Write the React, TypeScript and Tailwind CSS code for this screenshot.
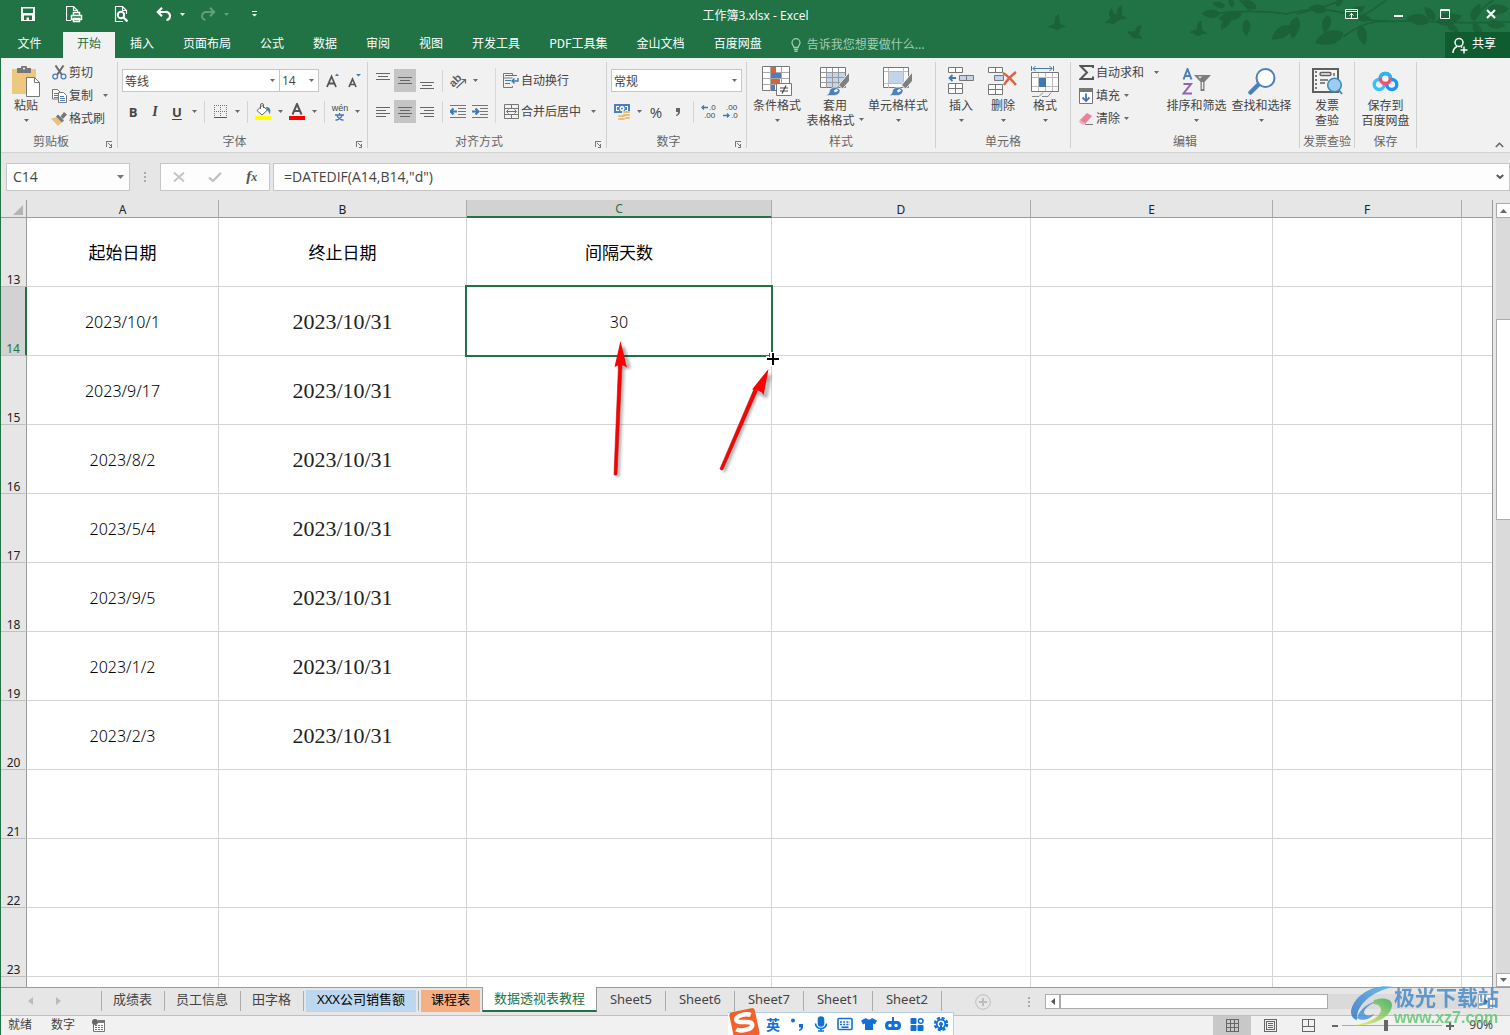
import React from "react";

type Kids = { children?: React.ReactNode };

/* ---------- small shared pieces ---------- */

function Caret({ className = "fill-[#6a6a6a]" }: { className?: string }) {
  return (
    <svg className={"h-[3px] w-[5px] shrink-0 " + className} viewBox="0 0 5 3">
      <path d="M0 0h5L2.5 3z" />
    </svg>
  );
}

function Sep() {
  return <div className="mx-1 h-[22px] w-px bg-[#d4d4d4]" />;
}

function Tool({ label, active, children }: Kids & { label: string; active?: boolean }) {
  return (
    <button
      aria-label={label}
      className={"flex h-[23px] w-[22px] shrink-0 items-center justify-center " + (active ? "bg-[#c5c5c5]" : "")}
    >
      {children}
    </button>
  );
}

function SplitTool({ label, children }: Kids & { label: string }) {
  return (
    <button aria-label={label} className="flex h-[23px] shrink-0 items-center">
      <span className="flex w-[22px] justify-center">{children}</span>
      <span className="flex w-3 justify-center">
        <Caret />
      </span>
    </button>
  );
}

function Group({ label, width, launcher, children }: Kids & { label: string; width: string; launcher?: boolean }) {
  return (
    <section className={"flex shrink-0 " + width}>
      <div className="flex min-w-0 flex-1 flex-col pt-0.5">
        <div className="flex h-[74px]">{children}</div>
        <div className="flex h-[14px] items-center leading-[14px] text-[#666]">
          <span className="flex-1 text-center">{label}</span>
          {launcher && (
            <button aria-label={label + "设置"} className="flex h-[14px] w-4 items-end pl-[5px]">
              <svg className="h-[7px] w-[7px]" viewBox="0 0 7 7" shapeRendering="crispEdges">
                <path d="M0 6V0h6v1H1v5z M6 3v4H3V6h2V3z M2 2h1v1h1v1h1v1H4V4H3V3H2z" fill="#777" />
              </svg>
            </button>
          )}
        </div>
      </div>
      <div className="my-1 w-px bg-[#d0d0d0]" />
    </section>
  );
}

function Big({ icon, lines, caret, inlineCaret, width }: { icon: React.ReactNode; lines: string[]; caret?: boolean; inlineCaret?: boolean; width: string }) {
  return (
    <button className={"flex shrink-0 flex-col items-center pt-[5px] leading-[15px] " + width}>
      <span className="flex h-8 items-center">{icon}</span>
      {lines.map((l, i) => (
        <span key={l} className="flex items-center gap-1">
          {l}
          {inlineCaret && i === lines.length - 1 && <Caret />}
        </span>
      ))}
      {caret && (
        <span className="flex h-[17px] items-center">
          <Caret />
        </span>
      )}
    </button>
  );
}

function Small({ icon, text, caret, gap = "gap-1.5" }: { icon: React.ReactNode; text: string; caret?: boolean; gap?: string }) {
  return (
    <button className={"flex h-[23px] items-center " + gap}>
      <span className="flex items-center gap-0.5">
        <span className="flex w-4 justify-center">{icon}</span>
        <span className="pb-0.5">{text}</span>
      </span>
      {caret && <Caret />}
    </button>
  );
}

function Combo({ label, value, width, options }: { label: string; value: string; width: string; options: string[] }) {
  return (
    <label className={"relative flex h-[23px] shrink-0 items-center " + width}>
      <select
        aria-label={label}
        defaultValue={value}
        className="h-full w-full appearance-none border border-[#c6c6c6] bg-white pl-0.5 text-[12px] leading-5 text-[#444] outline-none"
      >
        {options.map((o) => (
          <option key={o}>{o}</option>
        ))}
      </select>
      <Caret className="pointer-events-none absolute right-[5px] fill-[#6a6a6a]" />
    </label>
  );
}

/* ---------- ribbon icons ---------- */

const PasteIcon = () => (
  <svg width="28" height="31" viewBox="0 0 28 31">
    <path d="M0 3h24v25H0z" fill="#edc87e" />
    <path d="M5 7V2h4a3 3 0 0 1 6 0h4v5z" fill="#777" />
    <circle cx="12" cy="2.5" r="1" fill="#fff" />
    <path d="M14.500 11.500h8l5 5v14h-13z" fill="#fff" stroke="#777" />
    <path d="M22.500 11.500v5h5" fill="none" stroke="#777" />
  </svg>
);
const CutIcon = () => (
  <svg width="15" height="15" viewBox="0 0 15 15" fill="none">
    <path d="M3.500 0.500 10 10M11.500 0.500 5 10" stroke="#6a6a6a" strokeWidth="2" />
    <circle cx="3.200" cy="11.500" r="2.400" stroke="#4a7ebb" strokeWidth="1.300" />
    <circle cx="11.500" cy="11.500" r="2.400" stroke="#4a7ebb" strokeWidth="1.300" />
  </svg>
);
const CopyIcon = () => (
  <svg width="15" height="14" viewBox="0 0 15 14">
    <path d="M.5.5h5l2.500 2.500v7H.5z" fill="#fff" stroke="#777" />
    <path d="M2 4.500h4M2 6.500h4M2 8.500h4" stroke="#4a7ebb" />
    <path d="M6.500 3.500h5l3 3v7h-8z" fill="#fff" stroke="#777" />
    <path d="M8 7.500h4M8 9.500h5M8 11.500h5" stroke="#4a7ebb" />
  </svg>
);
const BrushIcon = () => (
  <svg width="16" height="14" viewBox="0 0 16 14">
    <path d="M0 6.500 6 5l5 5-4 4z" fill="#edc07a" />
    <path d="M5 4.500 7 2.500l6 6-2 2z" fill="#777" />
    <path d="M9.500 4.500 13 0l3 2.500-4 4.500z" fill="#777" />
  </svg>
);
const BorderIcon = () => (
  <svg width="13" height="13" viewBox="0 0 13 13" shapeRendering="crispEdges">
    <path d="M.5 0v12M6.500 0v12M12.500 0v12M0 .5h13M0 6.500h13" stroke="#777" strokeDasharray="1 1" />
    <path d="M0 12.500h13" stroke="#555" />
  </svg>
);
const FillIcon = () => (
  <svg width="17" height="17" viewBox="0 0 17 17">
    <path d="M7 2.500 12.500 7 7 12 2 7.500z" fill="#fff" stroke="#666" />
    <path d="M5.500 6V2a1.500 1.500 0 0 1 3 0v3" fill="none" stroke="#666" />
    <path d="M11 4c4 0 5 2 4 7-1 0-1-3-3-4z" fill="#4a7ebb" />
    <path d="M0 13h16v4H0z" fill="#ff0" />
  </svg>
);
function HLines({ rows }: { rows: [number, number, number][] }) {
  return (
    <svg width="14" height="18" viewBox="0 0 14 18" shapeRendering="crispEdges">
      {rows.map(([x, y, w]) => (
        <rect key={y} x={x} y={y} width={w} height="1" fill="#666" />
      ))}
    </svg>
  );
}
const OrientIcon = () => (
  <svg width="17" height="16" viewBox="0 0 17 16" className="overflow-visible">
    <text x="0" y="11" fontSize="11" fontWeight="700" fill="#5a5a5a" fontFamily="Liberation Sans, sans-serif" transform="rotate(-45 6 9)">
      ab
    </text>
    <path d="M6.500 15 15 7M11.500 6.500H15.500V10.500" fill="none" stroke="#666" strokeWidth="1.200" />
  </svg>
);
function IndentIcon({ right }: { right?: boolean }) {
  return (
    <svg width="16" height="14" viewBox="0 0 16 14">
      <path d="M0 .5h16M8 3.500h8M8 6.500h8M8 9.500h8M0 12.500h16" stroke="#777" />
      <path d={right ? "M0 6.500h5M3.500 3.500l3 3-3 3" : "M7 6.500H2M3.500 3.500l-3 3 3 3"} fill="none" stroke="#3f78b5" strokeWidth="2" />
    </svg>
  );
}
const WrapIcon = () => (
  <svg width="16" height="15" viewBox="0 0 16 15" fill="none">
    <path d="M9.500 2V.5h-9v14h9V13M.5 5h9" stroke="#777" />
    <path d="M2 2.500h12M2 7.500h6M2 10.500h5" stroke="#3f78b5" />
    <path d="M15 5v3H9.500M11.500 5.500 9 8l2.500 2.500" stroke="#3f78b5" strokeWidth="1.400" />
  </svg>
);
const MergeIcon = () => (
  <svg width="15" height="15" viewBox="0 0 15 15" fill="none">
    <path d="M.5.5h14v14H.5zM.5 4.500h14M.5 10.500h14M7.500 .5v4M7.500 10.500v4" stroke="#777" />
    <path d="M3 7.500h9M4.500 5.500l-2 2 2 2M10.500 5.500l2 2-2 2" stroke="#3f78b5" />
  </svg>
);
const MoneyIcon = () => (
  <svg width="17" height="16" viewBox="0 0 17 16">
    <path d="M0 0h16v9H0z" fill="#4a80bc" />
    <path d="M2 2h3v1H3v3h2v1H2zM11 2h3v5h-3V6h2V3h-2z" fill="#fff" />
    <circle cx="8" cy="4.500" r="2.500" fill="#fff" />
    <circle cx="8" cy="4.500" r="1" fill="#4a80bc" />
    <path d="M8 7h9v9H3v-5h5z" fill="#f1f1f1" />
    <g fill="#e9bd76">
      <rect x="9" y="7" width="7" height="2" rx="1" />
      <rect x="9" y="10" width="7" height="2" rx="1" />
      <rect x="4" y="11" width="7" height="2" rx="1" />
      <rect x="4" y="14" width="7" height="2" rx="1" />
      <rect x="11" y="13" width="5" height="2" rx="1" />
    </g>
  </svg>
);
function DecimalIcon({ dec }: { dec?: boolean }) {
  return (
    <svg width="16" height="15" viewBox="0 0 16 15" fill="#444" fontFamily="Liberation Sans, sans-serif" fontSize="8">
      <text x={dec ? 3 : 8} y="6">{dec ? ".00" : ".0"}</text>
      <text x={dec ? 8 : 3} y="14">{dec ? ".0" : ".00"}</text>
      <path d={dec ? "M0 11.500h6M4 9.500l2 2-2 2" : "M7 3.500H1M3 1.500l-2 2 2 2"} fill="none" stroke="#3f78b5" strokeWidth="1.300" />
    </svg>
  );
}
const CondIcon = () => (
  <svg width="30" height="31" viewBox="0 0 30 31">
    <path d="M.5.5h27v24H.5z" fill="#fff" stroke="#777" />
    <path d="M8.500 1v24M19.500 1v24M1 6.500h26M1 12.500h26M1 18.500h26" stroke="#aaa" />
    <path d="M9 1h5v6H9zM9 13h9v5H9z" fill="#d9623f" />
    <path d="M9 7h10v5H9zM9 19h4v5H9z" fill="#4a80bc" />
    <path d="M14.500 17.500h15v12h-15z" fill="#fff" stroke="#777" />
    <path d="M18 22h8M18 25h8M24 19.500l-4 8" stroke="#444" strokeWidth="1.200" />
  </svg>
);
const BrushOver = () => (
  <>
    <path d="M29.500 6v9l-7 8-4-4z" fill="#808080" stroke="#f1f1f1" />
    <path d="M5 29.500c5-1 4-4 5-6 3-3.500 9-2 10 1 0 4-4 5-7 5z" fill="#4a80bc" stroke="#f1f1f1" strokeWidth="0.600" />
    <path d="M14 25c1-2.500 4-2 4 0l-3 1.500z" fill="#fff" />
  </>
);
const TableFmtIcon = () => (
  <svg width="30" height="30" viewBox="0 0 30 30">
    <path d="M.5 1.500h25v20H.5z" fill="#fff" stroke="#777" />
    <path d="M6 7h19v14H6z" fill="#c3d5ea" />
    <path d="M6.500 2v20M12.500 2v20M18.500 2v20M1 6.500h24M1 11.500h24M1 16.500h24" stroke="#999" />
    <BrushOver />
  </svg>
);
const CellStyleIcon = () => (
  <svg width="30" height="30" viewBox="0 0 30 30">
    <path d="M.5 1.500h25v20H.5z" fill="#fff" stroke="#777" />
    <path d="M5.500 2v20M20.500 2v20M1 5.500h24M1 17.500h24" stroke="#bbb" />
    <path d="M6 6h14v11H6z" fill="#c3d5ea" />
    <BrushOver />
  </svg>
);
const InsertIcon = () => (
  <svg width="27" height="28" viewBox="0 0 27 28" fill="#fff" stroke="#777">
    <path d="M.5.5h14v5H.5zM7.500.5v5M.5 16.500h14v10H.5zM7.500 16.500v10M.5 21.500h14" />
    <path d="M11.500 8.500h14v5h-14zM18.500 8.500v5" fill="#c3d5ea" />
    <path d="M8 11H2M4.500 8 1.500 11l3 3" fill="none" stroke="#3f78b5" strokeWidth="1.800" />
  </svg>
);
const DeleteIcon = () => (
  <svg width="30" height="28" viewBox="0 0 30 28" fill="#fff" stroke="#777">
    <path d="M.5.5h14v5H.5zM7.500.5v5M.5 17.500h14v10H.5zM7.500 17.500v10M.5 22.500h14" />
    <path d="M6.500 8.500h9v5h-9z" fill="#c3d5ea" />
    <path d="M15 6c5 3 9 7 13 12M28 5c-5 4-9 8-12 13" fill="none" stroke="#d9623f" strokeWidth="2.400" />
  </svg>
);
const FormatIcon = () => (
  <svg width="28" height="31" viewBox="0 0 28 31" fill="none">
    <path d="M.5 0v5M22.500 0v5M2 2.500h19M4.500 0 2 2.500 4.500 5M18.500 0 21 2.500 18.500 5" stroke="#3f78b5" />
    <path d="M.5 6.500h27v19H.5z" fill="#fff" stroke="#777" />
    <path d="M7.500 7v18M14.500 7v18M21.500 7v18M1 11.500h26M1 20.500h26" stroke="#bbb" />
    <path d="M8 12h7v9H8z" fill="#3f78b5" />
    <path d="M1 30.500h7l4-4M11 30.500h6l3-4" stroke="#888" />
  </svg>
);
const SigmaIcon = () => (
  <svg width="15" height="15" viewBox="0 0 15 15">
    <path d="M14 3V1H1.500L8 7.500 1.500 14H14v-2.500" fill="none" stroke="#555" strokeWidth="2" />
  </svg>
);
const FillDownIcon = () => (
  <svg width="14" height="16" viewBox="0 0 14 16">
    <path d="M.5.5h13v15H.5z" fill="#fff" stroke="#777" />
    <path d="M0 0h14v4H0z" fill="#777" />
    <path d="M7 5.500v7M3.500 9.500 7 13l3.500-3.500" fill="none" stroke="#3f78b5" strokeWidth="1.800" />
  </svg>
);
const EraserIcon = () => (
  <svg width="15" height="13" viewBox="0 0 15 13">
    <path d="m1 8 7-7 5 3-7 8z" fill="#e9829a" />
    <path d="m1 8 5 4-2 1-4-3z" fill="#f3a9b8" />
    <path d="M6 12.500h8" stroke="#777" />
  </svg>
);
const SortIcon = () => (
  <svg width="29" height="27" viewBox="0 0 29 27">
    <path d="M1.500 11.500 5.500 1l4 10.500M3 8h5" fill="none" stroke="#4a80bc" strokeWidth="2" />
    <path d="M1.500 16H9L1.500 25.500H10" fill="none" stroke="#9461b5" strokeWidth="2" />
    <path d="M12 7h17l-6.500 7v9h-4v-9z" fill="#7d7d7d" />
    <path d="M16 8.500h4l-2 2zM19.800 14h1.400v7h-1.400z" fill="#f1f1f1" />
  </svg>
);
const FindIcon = () => (
  <svg width="28" height="27" viewBox="0 0 28 27">
    <path d="M2.500 24.500 11 16" stroke="#4a80bc" strokeWidth="4.500" strokeLinecap="round" />
    <circle cx="17.500" cy="10" r="9" fill="#fff" stroke="#4a80bc" strokeWidth="2" />
  </svg>
);
const InvoiceIcon = () => (
  <svg width="31" height="27" viewBox="0 0 31 27">
    <path d="M1 1h25v23H1z" fill="#f4f4f4" stroke="#5f5f5f" strokeWidth="2" />
    <path d="M4 3v19" stroke="#777" strokeDasharray="2 2" strokeWidth="2" />
    <rect x="8" y="4.500" width="11" height="3" rx="1.500" fill="none" stroke="#5f5f5f" strokeWidth="1.500" />
    <path d="M8 12h8M8 15h5M22 5v3" stroke="#5f5f5f" strokeWidth="1.400" />
    <path d="m26 21 4 5" stroke="#3d8fb5" strokeWidth="2" />
    <circle cx="22.500" cy="17" r="6.800" fill="#9ccbf5" stroke="#3d8fb5" strokeWidth="1.600" />
  </svg>
);
const CloudIcon = () => (
  <svg width="27" height="22" viewBox="0 0 27 22" fill="none" strokeWidth="3.400">
    <circle cx="7.200" cy="14.500" r="5" stroke="#35c3f7" />
    <circle cx="19.800" cy="14.500" r="5" stroke="#1497f5" />
    <circle cx="13.300" cy="8.500" r="5" fill="#f1f1f1" stroke="#f0506e" />
    <path d="M8 8a5.500 5.500 0 0 1 10.800 0" stroke="#29b6f6" />
  </svg>
);

/* ---------- header ---------- */

function Bird({ x, y, r }: { x: number; y: number; r: number }) {
  return <path transform={`translate(${x} ${y}) rotate(${r})`} d="M-26 2C-14-4-8-6-4-10-8-20-4-30 6-36 6-24 12-14 10-6 16-4 24-2 28 4 18 2 14 6 8 8 2 16-8 10-12 6-18 6-22 6-26 2z" />;
}
function Leaf({ x, y, r, s }: { x: number; y: number; r: number; s: number }) {
  return <path transform={`translate(${x} ${y}) rotate(${r}) scale(${s})`} d="M0 0C8-16 30-20 56-4 40 14 14 18 0 0z" />;
}
const leaves: [number, number, number, number][] = [
  [330, 42, 185, 1], [345, 20, 200, 0.7], [370, 22, 250, 0.6], [395, 40, 160, 0.8], [360, 52, 130, 0.8], [410, 58, 95, 0.9],
  [440, 25, 210, 0.9], [420, 20, 250, 0.6], [380, 48, 175, 1], [560, 50, 105, 1.2], [545, 78, 150, 1.3], [650, 30, 190, 1],
  [655, 45, 105, 1], [680, 20, 300, 0.7], [700, 100, 165, 1.6], [750, 75, 80, 1.1], [720, 40, -20, 0.9], [740, 52, 10, 0.8],
  [960, 62, 190, 1.3], [975, 60, 235, 0.9], [980, 66, -10, 1.4], [1010, 70, 40, 0.8], [1085, 60, -60, 1], [1090, 70, 60, 0.9],
  [1130, 30, 0, 1.2], [1130, 70, 10, 1],
];
function Foliage() {
  return (
    <svg className="pointer-events-none absolute top-0 right-0 h-[58px] w-[480px]" viewBox="0 0 1440 174" fill="#1b6238">
      <g transform="translate(240 0)">
        <Bird x={-160} y={78} r={0} />
        <Bird x={8} y={60} r={-15} />
        <Bird x={24} y={50} r={10} />
        <Bird x={75} y={104} r={25} />
        <Bird x={265} y={96} r={5} />
        <path
          d="M320 40C400 30 460 32 530 42 600 20 680 30 720 45 800 75 880 60 960 64 1040 70 1100 70 1200 66M420 34C410 20 400 10 390 0M560 42C600 30 660 20 690 0M700 110C740 80 770 66 830 62M745 50C780 40 800 20 830 0M1090 68C1100 40 1120 20 1150 0"
          fill="none"
          stroke="#1b6238"
          strokeWidth="5"
        />
        {leaves.map(([x, y, r, s], i) => (
          <Leaf key={i} x={x} y={y} r={r} s={s} />
        ))}
      </g>
    </svg>
  );
}

const tabs = ["插入", "页面布局", "公式", "数据", "审阅", "视图", "开发工具", "PDF工具集", "金山文档", "百度网盘"];

function Header() {
  return (
    <header className="relative h-[58px] shrink-0 bg-[#217346] text-white">
      <Foliage />
      <div className="relative grid h-8 grid-cols-[1fr_auto_1fr] items-start">
        <div className="flex h-7 items-center pl-[19px]">
          <button aria-label="保存" className="w-[46px]">
            <svg width="14" height="14" viewBox="0 0 14 14" className="ml-px">
              <path d="M0 0h14v14H0z" fill="#fff" />
              <path d="M2 1.500h10V6H2zM3 8.500h8V13H8v-2.500H5.500V13H3z" fill="#217346" />
            </svg>
          </button>
          <button aria-label="快速打印" className="w-12">
            <svg width="17" height="17" viewBox="0 0 17 17" fill="none" stroke="#fff">
              <path d="M5 14.500H.5V.5h7l4 4V7M7.500.5v4h4" strokeWidth="1.200" />
              <path d="M5.500 9.500h10v4h-10zM7.500 9V6.500h6V9M7.500 12.500h6v3h-6z" strokeWidth="1.500" />
            </svg>
          </button>
          <button aria-label="打印预览" className="w-[42px]">
            <svg width="14" height="17" viewBox="0 0 14 17" fill="none" stroke="#fff">
              <path d="M9 15.500H1.500v-15h7l4 4V8M8.500.5v4h4" strokeWidth="1.200" />
              <circle cx="7" cy="9" r="3.200" strokeWidth="2" />
              <path d="m9.500 11.500 4 4" strokeWidth="2.400" />
            </svg>
          </button>
          <button aria-label="撤消" className="flex w-11 items-center gap-2">
            <svg width="16" height="14" viewBox="0 0 16 14" fill="none" stroke="#fff" strokeWidth="2.200">
              <path d="M6 0.800 1.800 5 6 9.200M2 5h7.500a4 4 0 0 1 1 8" />
            </svg>
            <Caret className="fill-white" />
          </button>
          <button aria-label="恢复" className="flex w-[52px] items-center gap-2 opacity-30">
            <svg width="16" height="14" viewBox="0 0 16 14" fill="none" stroke="#fff" strokeWidth="2">
              <path d="M10 .8 14.200 5 10 9.200M14 5H6.500a4 4 0 0 0-1 8" />
            </svg>
            <Caret className="fill-white" />
          </button>
          <button aria-label="自定义快速访问工具栏">
            <svg width="5" height="6" viewBox="0 0 5 6" fill="#fff">
              <path d="M0 0h5v1H0zM0 3h5L2.500 5.500z" />
            </svg>
          </button>
        </div>
        <h1 className="h-8 font-['Open_Sans','Noto_Sans_CJK_SC',sans-serif] text-[12px] leading-8">工作簿3.xlsx - Excel</h1>
        <div className="flex h-7 items-center justify-end gap-9 pr-[14px]">
          <button aria-label="功能区显示选项">
            <svg width="13" height="10" viewBox="0 0 13 10" fill="none" stroke="#fff">
              <path d="M.5.5h12v9H.5zM.5 2.500h12M6.500 9V4.500M4.500 6.500l2-2 2 2" />
            </svg>
          </button>
          <button aria-label="最小化" className="h-3">
            <svg width="10" height="12" viewBox="0 0 10 12">
              <path d="M0 7h9v2H0z" fill="#fff" />
            </svg>
          </button>
          <button aria-label="最大化">
            <svg width="10" height="10" viewBox="0 0 10 10" fill="none" stroke="#fff">
              <path d="M.5.5h9v9h-9zM0 1.500h10" />
            </svg>
          </button>
          <button aria-label="关闭">
            <svg width="10" height="10" viewBox="0 0 10 10">
              <path d="m1 1 8 8M9 1 1 9" stroke="#fff" strokeWidth="2" />
            </svg>
          </button>
        </div>
      </div>
      <nav className="relative flex h-[26px] items-stretch">
        <button className="mr-1.5 w-14 pb-1 pl-px text-center">文件</button>
        <button className="mr-px bg-[#f1f1f1] px-[14px] pb-1 text-[#217346]">开始</button>
        <div className="flex gap-px">
          {tabs.map((t) => (
            <button key={t} className="px-[14px] pb-1">
              {t}
            </button>
          ))}
        </div>
        <label className="ml-[15px] flex items-center gap-1.5 text-[#a5cbb4]">
          <svg width="10" height="14" viewBox="0 0 10 14" fill="none" stroke="currentColor" strokeWidth="1.300">
            <path d="M3 9.500C3 8 1 7 1 4.700a4 4 0 0 1 8 0C9 7 7 8 7 9.500zM3 11.500h4M3.500 13.300h3" />
          </svg>
          <input aria-label="操作说明搜索" placeholder="告诉我您想要做什么..." className="w-36 bg-transparent pb-0.5 text-[12px] outline-none placeholder:text-[#a5cbb4]" />
        </label>
        <button className="ml-auto flex w-[65px] items-center gap-1 bg-[#0f5c30] pl-[7px]">
          <svg width="16" height="17" viewBox="0 0 16 17" fill="none" stroke="#fff" strokeWidth="1.500">
            <circle cx="7" cy="5.500" r="4" />
            <path d="M1 16c0-4 2-5.500 4-6.500M9 9.500l1 1M12 9.500v7M8.500 13h7" />
          </svg>
          <span className="pb-1">共享</span>
        </button>
      </nav>
    </header>
  );
}

function Ribbon() {
  return (
    <div className="flex h-[95px] shrink-0 border-b border-[#d2d2d2] bg-[#f1f1f1] text-[#444]">
      <Group label="剪贴板" width="w-[117px]" launcher>
        <Big icon={<PasteIcon />} lines={["粘贴"]} caret width="w-[50px]" />
        <div className="flex flex-col items-start pt-px">
          <Small icon={<CutIcon />} text="剪切" />
          <Small icon={<CopyIcon />} text="复制" caret gap="gap-2.5" />
          <Small icon={<BrushIcon />} text="格式刷" />
        </div>
      </Group>

      <Group label="字体" width="w-[250px]" launcher>
        <div className="flex flex-col gap-2 pt-[9px] pl-1">
          <div className="flex">
            <Combo label="字体" value="等线" width="w-[158px]" options={["等线", "宋体"]} />
            <div className="-ml-px flex font-['Open_Sans','Noto_Sans',sans-serif]">
              <Combo label="字号" value="14" width="w-10" options={["12", "14", "16"]} />
            </div>
            <div className="flex pl-0.5">
              <Tool label="增大字号">
                <svg width="13" height="15" viewBox="0 0 13 15">
                  <path d="M1 14 5.500 3.500 10 14M2.500 10.500h6" fill="none" stroke="#555" strokeWidth="1.800" />
                  <path d="M9 3h4l-2-2.500z" fill="#3f78b5" />
                </svg>
              </Tool>
              <Tool label="减小字号">
                <svg width="13" height="15" viewBox="0 0 13 15">
                  <path d="M1 14 4.500 6 8 14M2.500 11.500h4" fill="none" stroke="#555" strokeWidth="1.700" />
                  <path d="M8 1h5l-2.500 2.500z" fill="#3f78b5" />
                </svg>
              </Tool>
            </div>
          </div>
          <div className="flex items-center font-['Open_Sans','Noto_Sans',sans-serif] text-[13px] font-bold text-[#444]">
            <Tool label="加粗">B</Tool>
            <Tool label="倾斜">
              <i className="font-['Liberation_Serif',serif] text-[14px]">I</i>
            </Tool>
            <SplitTool label="下划线">
              <span className="underline underline-offset-2">U</span>
            </SplitTool>
            <Sep />
            <SplitTool label="边框">
              <BorderIcon />
            </SplitTool>
            <Sep />
            <SplitTool label="填充颜色">
              <FillIcon />
            </SplitTool>
            <SplitTool label="字体颜色">
              <svg width="16" height="17" viewBox="0 0 16 17">
                <path d="M3.500 11.500 8 1l4.500 10.500M5 8h6" fill="none" stroke="#555" strokeWidth="2" />
                <path d="M0 13h16v4H0z" fill="#f00" />
              </svg>
            </SplitTool>
            <Sep />
            <SplitTool label="拼音">
              <span className="flex flex-col items-center font-['Liberation_Sans',sans-serif] text-[9px] leading-[10px] font-normal">
                wén
                <svg width="9" height="8" viewBox="0 0 9 8" fill="none" stroke="#3f78b5" strokeWidth="1.400">
                  <path d="M0 2h9M4.500 0v2M2 2.500C3 5 5 6.500 8.500 7.300M7 2.500C6 5 4 6.500.5 7.300" />
                </svg>
              </span>
            </SplitTool>
          </div>
        </div>
      </Group>

      <Group label="对齐方式" width="w-[239px]" launcher>
        <div className="flex flex-col gap-2 pt-[9px] pl-1">
          <div className="flex items-center">
            <Tool label="顶端对齐"><HLines rows={[[0, 1, 14], [2, 4, 10], [0, 7, 14]]} /></Tool>
            <Tool label="垂直居中" active><HLines rows={[[0, 5, 14], [2, 8, 10], [0, 11, 14]]} /></Tool>
            <Tool label="底端对齐"><HLines rows={[[0, 10, 14], [2, 13, 10], [0, 16, 14]]} /></Tool>
            <Sep />
            <SplitTool label="方向"><OrientIcon /></SplitTool>
          </div>
          <div className="flex items-center">
            <Tool label="左对齐"><HLines rows={[[0, 4, 14], [0, 7, 10], [0, 10, 14], [0, 13, 10]]} /></Tool>
            <Tool label="居中" active><HLines rows={[[0, 4, 14], [2, 7, 10], [0, 10, 14], [2, 13, 10]]} /></Tool>
            <Tool label="右对齐"><HLines rows={[[0, 4, 14], [4, 7, 10], [0, 10, 14], [4, 13, 10]]} /></Tool>
            <Sep />
            <Tool label="减少缩进量"><IndentIcon /></Tool>
            <Tool label="增加缩进量"><IndentIcon right /></Tool>
          </div>
        </div>
        <div className="mx-1 mt-2 h-[55px] w-px bg-[#d9d9d9]" />
        <div className="flex flex-col items-start gap-2 pt-[9px] pl-[3px]">
          <Small icon={<WrapIcon />} text="自动换行" />
          <Small icon={<MergeIcon />} text="合并后居中" caret gap="gap-2.5" />
        </div>
      </Group>

      <Group label="数字" width="w-[140px]" launcher>
        <div className="flex flex-col gap-2 pt-[9px] pl-1">
          <Combo label="数字格式" value="常规" width="w-[131px]" options={["常规", "数值", "日期"]} />
          <div className="flex items-center">
            <SplitTool label="会计数字格式"><MoneyIcon /></SplitTool>
            <Tool label="百分比样式"><span className="font-['Open_Sans',sans-serif] text-[15px]">%</span></Tool>
            <Tool label="千位分隔样式">
              <svg width="6" height="8" viewBox="0 0 6 8"><path d="M1 0h4v3.500C5 6 3.500 7.500 1 8V7c1.500-.6 2-1.500 2-3H1z" fill="#666" /></svg>
            </Tool>
            <Sep />
            <Tool label="增加小数位数"><DecimalIcon /></Tool>
            <Tool label="减少小数位数"><DecimalIcon dec /></Tool>
          </div>
        </div>
      </Group>

      <Group label="样式" width="w-[189px]">
        <div className="flex pl-0.5">
          <Big icon={<CondIcon />} lines={["条件格式"]} caret width="w-14" />
          <Big icon={<TableFmtIcon />} lines={["套用", "表格格式"]} inlineCaret width="w-[60px]" />
          <Big icon={<CellStyleIcon />} lines={["单元格样式"]} caret width="w-[66px]" />
        </div>
      </Group>

      <Group label="单元格" width="w-[135px]">
        <div className="flex pl-1">
          <Big icon={<InsertIcon />} lines={["插入"]} caret width="w-[42px]" />
          <Big icon={<DeleteIcon />} lines={["删除"]} caret width="w-[42px]" />
          <Big icon={<FormatIcon />} lines={["格式"]} caret width="w-[42px]" />
        </div>
      </Group>

      <Group label="编辑" width="w-[229px]">
        <div className="flex w-[93px] flex-col items-start pt-px pl-[7px]">
          <Small icon={<SigmaIcon />} text="自动求和" caret gap="gap-2.5" />
          <Small icon={<FillDownIcon />} text="填充" caret gap="gap-1" />
          <Small icon={<EraserIcon />} text="清除" caret gap="gap-1" />
        </div>
        <Big icon={<SortIcon />} lines={["排序和筛选"]} caret width="w-[65px]" />
        <Big icon={<FindIcon />} lines={["查找和选择"]} caret width="w-[65px]" />
      </Group>

      <Group label="发票查验" width="w-[55px]">
        <Big icon={<InvoiceIcon />} lines={["发票", "查验"]} width="w-full" />
      </Group>
      <Group label="保存" width="w-[62px]">
        <Big icon={<CloudIcon />} lines={["保存到", "百度网盘"]} width="w-full" />
      </Group>

      <button aria-label="折叠功能区" className="mt-auto ml-auto pr-1.5 pb-1">
        <svg width="9" height="6" viewBox="0 0 9 6">
          <path d="m.8 5 3.700-3.700L8.200 5" fill="none" stroke="#666" strokeWidth="1.600" />
        </svg>
      </button>
    </div>
  );
}

function FormulaBar() {
  return (
    <div className="flex h-[47px] shrink-0 items-start bg-[#e6e6e6] pt-[10px] pl-[5px] font-['Open_Sans','Noto_Sans',sans-serif] text-[#444]">
      <label className="relative flex h-7 w-[124px] items-center">
        <input aria-label="名称框" defaultValue="C14" className="h-full w-full border border-[#c6c6c6] bg-[#fdfdfd] pb-px pl-1.5 text-[14px] outline-none" />
        <svg className="absolute right-1.5 h-1 w-[7px]" viewBox="0 0 7 4"><path d="M0 0h7L3.500 4z" fill="#777" /></svg>
      </label>
      <svg className="mx-[14px] mt-[9px] shrink-0" width="2" height="12" viewBox="0 0 2 12" fill="#aaa" shapeRendering="crispEdges">
        <path d="M0 0h2v2H0zM0 4h2v2H0zM0 8h2v2H0z" />
      </svg>
      <div className="flex h-7 w-[110px] shrink-0 items-center justify-around border border-[#c6c6c6] bg-[#fdfdfd]">
        <button aria-label="取消">
          <svg width="12" height="10" viewBox="0 0 12 10"><path d="m1 .5 10 9M11 .5l-10 9" stroke="#c0c0c0" strokeWidth="1.700" /></svg>
        </button>
        <button aria-label="输入">
          <svg width="14" height="10" viewBox="0 0 14 10"><path d="m1 5.500 4 3.500L13 .8" fill="none" stroke="#c0c0c0" strokeWidth="2.200" /></svg>
        </button>
        <button aria-label="插入函数" className="pb-0.5 font-['Liberation_Serif',serif] text-[15px] font-bold text-[#555] italic">
          f<span className="text-[12px]">x</span>
        </button>
      </div>
      <label className="relative ml-[3px] flex h-7 flex-1 items-center">
        <input
          aria-label="编辑栏"
          defaultValue={'=DATEDIF(A14,B14,"d")'}
          className="h-full w-full border border-[#c6c6c6] bg-[#fdfdfd] pb-px pl-[10px] text-[14px] outline-none"
        />
        <svg className="absolute right-1.5" width="8" height="6" viewBox="0 0 8 6"><path d="m.8 1 3.200 3L7.200 1" fill="none" stroke="#555" strokeWidth="2" /></svg>
      </label>
    </div>
  );
}

/* ---------- sheet ---------- */

const cols = ["A", "B", "C", "D", "E", "F", ""];
const rows: { n: number; a?: string; b?: string; c?: string }[] = [
  { n: 13, a: "起始日期", b: "终止日期", c: "间隔天数" },
  { n: 14, a: "2023/10/1", b: "2023/10/31", c: "30" },
  { n: 15, a: "2023/9/17", b: "2023/10/31" },
  { n: 16, a: "2023/8/2", b: "2023/10/31" },
  { n: 17, a: "2023/5/4", b: "2023/10/31" },
  { n: 18, a: "2023/9/5", b: "2023/10/31" },
  { n: 19, a: "2023/1/2", b: "2023/10/31" },
  { n: 20, a: "2023/2/3", b: "2023/10/31" },
  { n: 21 },
  { n: 22 },
  { n: 23 },
];

function Annotations() {
  return (
    <svg className="pointer-events-none absolute top-0 left-0 z-20 h-[200px] w-[320px]" viewBox="0 0 320 200">
      <g fill="none" stroke="#000" opacity="0.35" strokeWidth="3" className="blur-[1.5px]">
        <path d="M156 79 151 190M291 104 257 185" />
        <path d="m156 60-4 20h10zM303 88l-13 17 9 4z" />
      </g>
      <g fill="#f00" stroke="#b01010" strokeWidth="0.600">
        <path d="M151.500 78h3.500l-5 109.500q-1.500 1.500-3 0z" />
        <path d="m287 102 3.500 1.500-34.500 79q-2 1.500-3-.8z" />
      </g>
      <path d="M153.500 54 160 80.500q-6.500-4-12.500-.5zM301.500 82l-4.800 26q-4-6-11.700-5.500z" fill="#f00" />
      <path d="M299 69h14v6h-14zM303 65h6v14h-6z" fill="#fff" />
      <path d="M302 66h1v4h-1z" fill="#217346" />
      <path d="M300 71h12v2h-12zM305 66h2v12h-2z" fill="#000" />
    </svg>
  );
}

function Sheet() {
  const cell = "border-r border-b border-[#d4d4d4] p-0 text-center";
  return (
    <div className="flex min-h-0 flex-1 bg-[#e6e6e6]">
      <div className="min-w-0 flex-1 overflow-hidden border-r border-[#9b9b9b] bg-white">
        <table className="w-full table-fixed border-separate border-spacing-0 text-black">
          <colgroup>
            <col className="w-[26px]" />
            <col className="w-[192px]" />
            <col className="w-[248px]" />
            <col className="w-[305px]" />
            <col className="w-[259px]" />
            <col className="w-[242px]" />
            <col className="w-[189px]" />
            <col />
          </colgroup>
          <thead>
            <tr className="h-[18px] bg-[#e6e6e6] text-[#222]">
              <th className="border-r border-b border-[#9b9b9b] p-0">
                <svg className="mt-0.5 ml-3" width="10" height="10" viewBox="0 0 10 10"><path d="M10 0v10H0z" fill="#b4b4b4" /></svg>
              </th>
              {cols.map((c, i) => (
                <th
                  key={i}
                  className={
                    "p-0 pt-0.5 font-['Noto_Sans','Open_Sans',sans-serif] text-[12px] leading-[14px] font-normal " +
                    (c === "C"
                      ? "border-r border-b-2 border-r-[#ababab] border-b-[#217346] bg-[#d2d2d2] text-[#217346]"
                      : i === 6
                        ? "border-b border-[#9b9b9b]"
                        : "border-r border-b border-r-[#ababab] border-b-[#9b9b9b]")
                  }
                >
                  {c}
                </th>
              ))}
            </tr>
          </thead>
          <tbody>
            {rows.map((r) => (
              <tr key={r.n} className={"h-[69px] " + (r.n === 13 ? "text-[17px]" : "font-['Noto_Sans','Open_Sans',sans-serif] text-[16px]")}>
                <th
                  className={
                    "p-0 text-center align-bottom font-['Noto_Sans','Open_Sans',sans-serif] text-[12px] leading-3 font-normal " +
                    (r.n === 14
                      ? "border-r-2 border-b border-r-[#217346] border-b-[#c0c0c0] bg-[#d2d2d2] text-[#217346]"
                      : "border-r border-b border-r-[#9b9b9b] border-b-[#c0c0c0] bg-[#e6e6e6] text-[#222]")
                  }
                >
                  {r.n}
                </th>
                <td className={cell + (r.n > 13 ? " pt-0.5 font-light" : "")}>{r.a}</td>
                <td className={cell + (r.n > 13 ? " pt-0.5 font-['Liberation_Serif',serif] text-[22px] text-[#222]" : "")}>{r.b}</td>
                <td className={cell + (r.n > 13 ? " relative pt-0.5 font-light" : "")}>
                  {r.c}
                  {r.n === 14 && (
                    <>
                      <div className="pointer-events-none absolute -inset-0.5 z-10 border-2 border-[#217346]" />
                      <Annotations />
                    </>
                  )}
                </td>
                <td className={cell} />
                <td className={cell} />
                <td className={cell} />
                <td className="border-b border-[#d4d4d4] p-0" />
              </tr>
            ))}
            <tr className="h-[69px]">
              <th className="border-r border-[#9b9b9b] bg-[#e6e6e6] p-0" />
              {cols.map((c) => (
                <td key={c} className={c ? cell : "p-0"} />
              ))}
            </tr>
          </tbody>
        </table>
      </div>
      <div className="ml-[3px] flex w-[14px] flex-col pt-[3px]">
        <button aria-label="向上滚动" className="flex h-[15px] items-center justify-center border border-r-0 border-[#ababab] bg-white">
          <svg width="7" height="4" viewBox="0 0 7 4"><path d="M0 4h7L3.500 0z" fill="#666" /></svg>
        </button>
        <div className="flex flex-1 flex-col bg-[#dadada]">
          <div className="basis-[13.400%]" />
          <div className="basis-[26.600%] border border-r-0 border-[#ababab] bg-white" />
        </div>
        <button aria-label="向下滚动" className="flex h-[14px] items-center justify-center border border-r-0 border-[#ababab] bg-white">
          <svg width="7" height="4" viewBox="0 0 7 4"><path d="M0 0h7L3.500 4z" fill="#666" /></svg>
        </button>
      </div>
    </div>
  );
}

function SheetTabs() {
  const plain = "mt-[3px] flex h-5 items-center border-r border-[#ababab] pb-[5px]";
  return (
    <div className="flex h-[28px] shrink-0 bg-[#e6e6e6] text-[13px] text-[#444]">
      <div className="flex min-w-0 flex-1 border-t border-[#9b9b9b]">
        <div className="mt-[3px] flex h-5 w-[101px] items-center gap-[23px] border-r border-[#ababab] pl-[27px]">
          <button aria-label="上一个工作表"><svg width="5" height="8" viewBox="0 0 5 8"><path d="M5 0v8L0 4z" fill="#bbb" /></svg></button>
          <button aria-label="下一个工作表"><svg width="5" height="8" viewBox="0 0 5 8"><path d="M0 0v8l5-4z" fill="#bbb" /></svg></button>
        </div>
        <button className={plain + " pr-3 pl-[11px]"}>成绩表</button>
        <button className={plain + " pr-3 pl-[11px]"}>员工信息</button>
        <button className={plain + " pr-3 pl-[11px]"}>田字格</button>
        <div className="mt-[3px] flex h-5 items-center border-r border-[#ababab] px-0.5">
          <button className="h-[22px] bg-[#bdd7ee] px-[11px] pb-1 font-['Noto_Sans','Noto_Sans_CJK_SC',sans-serif] text-black">XXX公司销售额</button>
        </div>
        <button className="mt-0.5 mr-0.5 ml-0.5 h-[22px] bg-[#f4b084] px-2.5 pb-1 text-black">课程表</button>
        <button className="-mt-px h-[25px] border-x border-b-2 border-x-[#9b9b9b] border-b-[#217346] bg-white px-[11px] pb-px text-[#217346]">数据透视表教程</button>
        {["Sheet5", "Sheet6", "Sheet7", "Sheet1", "Sheet2"].map((s) => (
          <button key={s} className={plain + " w-[69px] justify-center font-['Noto_Sans',sans-serif]"}>
            {s}
          </button>
        ))}
        <button aria-label="新工作表" className="ml-[33px] flex items-center">
          <svg width="16" height="16" viewBox="0 0 16 16" fill="none" stroke="#bdbdbd">
            <circle cx="8" cy="8" r="7.300" />
            <path d="M8 4v8M4 8h8" strokeWidth="2" />
          </svg>
        </button>
      </div>
      <div className="flex w-[482px] shrink-0 items-center border-t border-[#9b9b9b] pr-[17px]">
        <svg className="mr-[15px] shrink-0" width="2" height="10" viewBox="0 0 2 10" fill="#aaa" shapeRendering="crispEdges">
          <path d="M0 0h2v2H0zM0 4h2v2H0zM0 8h2v2H0z" />
        </svg>
        <button aria-label="向左滚动" className="flex h-[15px] w-[15px] items-center justify-center border border-[#ababab] bg-white">
          <svg width="4" height="7" viewBox="0 0 4 7"><path d="M4 0v7L0 3.500z" fill="#555" /></svg>
        </button>
        <div className="flex h-[15px] flex-1 bg-[#dadada]">
          <div className="basis-[64%] border border-[#ababab] bg-white" />
        </div>
        <button aria-label="向右滚动" className="flex h-[15px] w-[15px] items-center justify-center border border-[#ababab] bg-white">
          <svg width="4" height="7" viewBox="0 0 4 7"><path d="M0 0v7l4-3.500z" fill="#555" /></svg>
        </button>
      </div>
    </div>
  );
}

function StatusBar() {
  return (
    <footer className="flex h-5 shrink-0 items-center border-t border-[#c0c0c0] bg-[#f1f1f1] pr-[17px] pl-[7px] text-[#444]">
      <span className="w-[43px] pb-[3px]">就绪</span>
      <span className="w-[41px] pb-[3px]">数字</span>
      <button aria-label="宏录制">
        <svg width="13" height="13" viewBox="0 0 13 13">
          <path d="M1.500 5v7.500h11v-11H6" fill="#fff" stroke="#777" />
          <path d="M6 1h7v3H6z" fill="#777" />
          <path d="M3 6.500h8M3 8.500h8M3 10.500h8" stroke="#777" strokeDasharray="2 1" />
          <circle cx="3" cy="3" r="3" fill="#666" />
        </svg>
      </button>
      <div className="ml-auto flex h-full items-center">
        <button aria-label="普通" className="flex h-full w-[38px] items-center justify-center bg-[#c8c8c8]">
          <svg width="13" height="13" viewBox="0 0 13 13" fill="none" stroke="#666" shapeRendering="crispEdges"><path d="M.5.5h12v12H.5zM4.500 0v13M8.500 0v13M0 4.500h13M0 8.500h13" /></svg>
        </button>
        <button aria-label="页面布局" className="flex h-full w-[38px] items-center justify-center">
          <svg width="13" height="13" viewBox="0 0 13 13" fill="none" stroke="#666" shapeRendering="crispEdges"><path d="M.5.5h12v12H.5zM2.500 2.500h8v8h-8zM4 4.500h5M4 6.500h5M4 8.500h5" /></svg>
        </button>
        <button aria-label="分页预览" className="flex h-full w-[38px] items-center justify-center">
          <svg width="13" height="13" viewBox="0 0 13 13" fill="none" stroke="#666" shapeRendering="crispEdges"><path d="M.5.5h12v12H.5zM6.500 1v7M1 7.500h11" /></svg>
        </button>
        <button aria-label="缩小" className="ml-[5px] flex h-full items-center">
          <svg width="6" height="6" viewBox="0 0 6 6"><path d="M0 2h6v2H0z" fill="#666" /></svg>
        </button>
        <input
          type="range"
          aria-label="缩放"
          min={10}
          max={200}
          defaultValue={94}
          className="mx-1 h-3 w-[100px] appearance-none bg-[linear-gradient(#aaa,#aaa)] bg-[length:100%_1px] bg-center bg-no-repeat [&::-webkit-slider-thumb]:h-[11px] [&::-webkit-slider-thumb]:w-1 [&::-webkit-slider-thumb]:appearance-none [&::-webkit-slider-thumb]:bg-[#666]"
        />
        <button aria-label="放大" className="flex h-full items-center">
          <svg width="8" height="8" viewBox="0 0 8 8"><path d="M0 3h8v2H0zM3 0h2v8H3z" fill="#666" /></svg>
        </button>
        <button className="w-[39px] pb-0.5 text-right font-['Noto_Sans',sans-serif]">90%</button>
      </div>
    </footer>
  );
}

function ImeBar() {
  const blue = "#1070d8";
  return (
    <div className="absolute bottom-0 left-[727px] flex h-[23px] items-center border-t border-r border-[#b8cde6] bg-white pl-[33px] text-[#1070d8]">
      <svg className="absolute -top-[5px] left-0" width="32" height="28" viewBox="0 0 32 28">
        <g transform="rotate(-12 16 14)">
          <rect x="3" y="2" width="26" height="28" rx="3" fill="#f4602a" />
          <path d="M24 8.500C20 5.500 9 6 9 10.500S23.500 13 23.500 18 11 23 7 19.500" fill="none" stroke="#fff" strokeWidth="4.500" />
        </g>
      </svg>
      <button className="w-6 text-center text-[14px] leading-5 font-bold">英</button>
      {[
        <g key="p" fill={blue}>
          <circle cx="4" cy="4.500" r="2" />
          <path d="M10 8h4v3q0 3-4 4v-1.500q2-.5 2-2h-2z" />
        </g>,
        <g key="m" fill="none" stroke={blue} strokeWidth="1.600">
          <rect x="5.500" y="1" width="5" height="9" rx="2.500" fill={blue} />
          <path d="M2.500 7.500a5.500 5 0 0 0 11 0M8 12.500v3M5 15h6" />
        </g>,
        <g key="k" fill="none" stroke={blue} strokeWidth="1.600">
          <rect x="1" y="2.500" width="14" height="11" rx="1" />
          <path d="M3 6h10M3 8.500h10" strokeDasharray="2 1.200" />
          <path d="M4.500 11.200h7" />
        </g>,
        <path key="s" d="M5 2q3 3 6 0l5 2.500-2 4-2-1V14H4V7.500l-2 1-2-4z" fill={blue} />,
        <g key="g" fill={blue}>
          <path d="M4 5h8q4 0 4 4.500T12 14H4Q0 14 0 9.500T4 5zM7 1h2v4H7z" />
          <circle cx="5" cy="9.500" r="1.700" fill="#fff" />
          <circle cx="11" cy="9.500" r="1.700" fill="#fff" />
        </g>,
        <g key="b" fill={blue}>
          <rect x="1.500" y="2" width="6" height="6" rx="1" />
          <rect x="1.500" y="9" width="6" height="6" rx="1" />
          <rect x="8.500" y="9" width="6" height="6" rx="1" />
          <circle cx="11.700" cy="5" r="2.300" fill="none" stroke={blue} strokeWidth="1.500" />
        </g>,
        <g key="c" fill="none" stroke={blue}>
          <circle cx="8" cy="8" r="6" strokeWidth="2.500" strokeDasharray="3 1.700" />
          <circle cx="8" cy="8" r="4.300" strokeWidth="1.800" />
          <path d="M8 14V8" strokeWidth="2" />
          <circle cx="8" cy="8" r="1.500" fill={blue} />
        </g>,
      ].map((shape, i) => (
        <button key={i} aria-label={"输入法工具 " + (i + 1)} className="flex w-6 justify-center">
          <svg width="16" height="16" viewBox="0 0 16 16">{shape}</svg>
        </button>
      ))}
    </div>
  );
}

function Watermark() {
  return (
    <div className="pointer-events-none absolute right-[11px] bottom-[7px] flex items-center opacity-80">
      <svg width="44" height="44" viewBox="0 0 44 44">
        <defs>
          <linearGradient id="wb" x1="0" y1="1" x2="1" y2="0">
            <stop offset="0" stopColor="#2a6fc4" />
            <stop offset="1" stopColor="#4fb4ec" />
          </linearGradient>
          <linearGradient id="wg" x1="0" y1="1" x2="1" y2="0">
            <stop offset="0" stopColor="#f3ee55" />
            <stop offset="1" stopColor="#2fae5a" />
          </linearGradient>
        </defs>
        <path d="M43 3C26-1 4 10 1 27c0 5 2 8 6 9C6 22 20 8 43 3z" fill="url(#wb)" />
        <path d="M7 34c2-9 12-16 22-17-10 3-15 8-15 12 1 3 6 3 10 1-3 5-11 8-17 4z" fill="#3f8fd6" />
        <path d="M24 16c8-3 18-2 18 5C42 33 22 43 4 41c16-2 26-8 27-15 0-4-3-6-8-6z" fill="url(#wg)" />
      </svg>
      <div className="flex flex-col">
        <span className="text-[21px] leading-[24px] font-bold text-[#3f86c8]">极光下载站</span>
        <span className="font-['Liberation_Sans',sans-serif] text-[16px] leading-[20px] font-bold text-[#5cc46c]">www.xz7.com</span>
      </div>
    </div>
  );
}

export default function App() {
  return (
    <div className="relative flex h-screen w-full flex-col overflow-hidden border-l border-[#217346] bg-[#e6e6e6] font-['Noto_Sans_CJK_SC',sans-serif] text-[12px] leading-4 whitespace-nowrap">
      <Header />
      <Ribbon />
      <FormulaBar />
      <Sheet />
      <SheetTabs />
      <StatusBar />
      <ImeBar />
      <Watermark />
    </div>
  );
}
